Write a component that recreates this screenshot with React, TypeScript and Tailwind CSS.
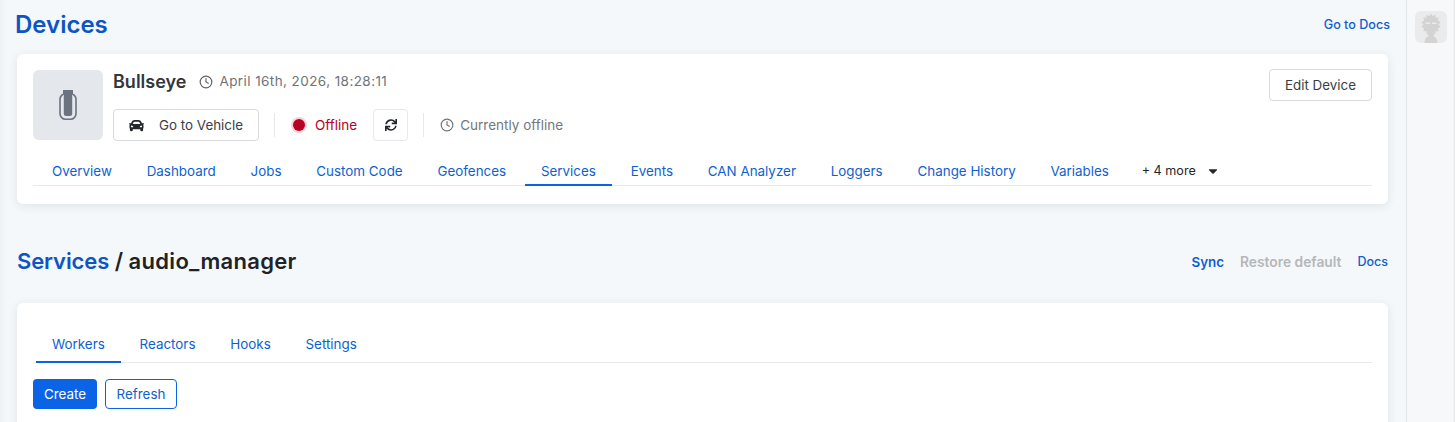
import React from 'react';
import { Clock } from 'lucide-react';
import { FaCar, FaCaretDown, FaSync } from 'react-icons/fa';

const deviceTabs = ['Overview', 'Dashboard', 'Jobs', 'Custom Code', 'Geofences', 'Services', 'Events', 'CAN Analyzer', 'Loggers', 'Change History', 'Variables'];
const serviceTabs = ['Workers', 'Reactors', 'Hooks', 'Settings'];

function Tab({ label, active, tall }: { label: string; active?: boolean; tall?: boolean }) {
  return (
    <a className={`-mb-px mr-[2.8px] block border-b-2 px-4 text-[13.4px] leading-[22px] text-[#0f5fd0] ${tall ? 'pb-[6px]' : 'pb-[2px]'} ${active ? 'border-[#0b63e5]' : 'border-transparent'}`}>
      {label}
    </a>
  );
}

function DriveIcon() {
  return (
    <svg width="18" height="30" viewBox="0 0 18 30" fill="none">
      <rect x="4" y="0" width="10" height="4" fill="#6b7280" />
      <rect x="1" y="3.800" width="16" height="25.400" rx="5.500" stroke="#6b7280" strokeWidth="1.600" />
      <path d="M4.800 4h8.400v19.500a2.500 2.500 0 0 1-2.500 2.500H7.300a2.500 2.500 0 0 1-2.500-2.500z" fill="#6b7280" />
    </svg>
  );
}

// spiky hair outline around the head
const hair = Array.from({ length: 28 }, (_, i) => {
  const a = (i / 28) * Math.PI * 2;
  const r = i % 2 === 0 ? 11 : 8.500;
  return `${(16 + Math.sin(a) * r * 0.9).toFixed(1)},${(13.500 - Math.cos(a) * r).toFixed(1)}`;
}).join(' ');

function Avatar() {
  return (
    <div className="h-8 w-8 overflow-hidden rounded-md bg-[#ebebeb]">
      <svg width="32" height="32" viewBox="0 0 32 32">
        <polygon fill="#d3d3d3" points={hair} />
        <path fill="#d3d3d3" d="M13 22h6v3h-6zM9.500 32c0-4.500 2.500-7 6.500-7s6.500 2.500 6.500 7z" />
        <path fill="#ebebeb" d="M10.500 11.500h4.500v1.500h-4.500zM17 11.500h4.500v1.500H17z" />
      </svg>
    </div>
  );
}

export default function App() {
  return (
    <div className="flex h-screen overflow-hidden bg-[linear-gradient(to_right,#edf1f3,#f5f8fa_6px)] font-['Inter',sans-serif] text-[#1f2328]">
      <main className="min-w-0 flex-1 pl-[15px] pr-[18px]">
        <div className="flex h-[54px] items-center justify-between pb-[4px]">
          <h1 className="text-[24px] font-semibold text-[#0d55c4]">Devices</h1>
          <a className="mr-[-2px] text-[12.6px] font-medium text-[#0f5fd0]">Go to Docs</a>
        </div>

        {/* Device card */}
        <section className="ml-[2px] h-[150px] rounded-md bg-white px-4 pt-4 shadow-[0_2px_10px_rgba(30,50,70,0.1)]">
          <div className="flex h-[70px] items-start">
            <div className="flex h-[70px] w-[70px] shrink-0 items-center justify-center rounded-md bg-[#e4e7eb]">
              <DriveIcon />
            </div>
            <div className="ml-[10px] mr-auto">
              <div className="flex h-[22px] items-center pt-[1px]">
                <span className="text-[18px] font-semibold text-[#33373d]">Bullseye</span>
                <Clock className="ml-[13px] h-[14px] w-[14px] text-[#5f6368]" />
                <span className="ml-[6px] text-[13.5px] tracking-[0.42px] text-[#6f7378]">April 16th, 2026, 18:28:11</span>
              </div>
              <div className="mt-[17px] flex h-[32px] items-center">
                <button className="flex h-[32px] w-[146px] items-center rounded border border-[#d7d9dc] pl-[15px] text-[13.4px] text-[#3a3e44]">
                  <FaCar className="h-[15px] w-[15px] text-[#24272b]" />
                  <span className="ml-[15px]">Go to Vehicle</span>
                </button>
                <div className="ml-[15px] h-[24px] w-px bg-[#e6e8ea]" />
                <span className="ml-[16px] flex h-[16px] w-[16px] items-center justify-center rounded-full bg-[#f8d3da]">
                  <span className="h-[12px] w-[12px] rounded-full bg-[#b80024]" />
                </span>
                <span className="ml-[8px] text-[13.5px] text-[#b80024]">Offline</span>
                <button className="ml-[16px] flex h-[32px] w-[35px] items-center justify-center rounded border border-[#e6e8ea]">
                  <FaSync className="h-[12px] w-[12px] text-[#24272b]" />
                </button>
                <div className="ml-[15px] h-[24px] w-px bg-[#e6e8ea]" />
                <Clock className="ml-[16px] h-[14px] w-[14px] text-[#6f7378]" />
                <span className="ml-[6px] text-[13.5px] text-[#74787d]">Currently offline</span>
              </div>
            </div>
            <button className="-mt-px h-[32px] w-[103px] rounded border border-[#d7d9dc] text-[13.4px] text-[#3a3e44]">Edit Device</button>
          </div>
          <div className="mt-[19px] flex h-[27px] items-end border-b border-[#e8eaec] pl-[3px]">
            {deviceTabs.map(t => (
              <Tab key={t} label={t} active={t === 'Services'} />
            ))}
            <button className="mb-[1px] ml-[14px] flex h-[24px] items-center pb-[2px] text-[12.6px] text-[#24272b]">
              + 4 more
              <FaCaretDown className="ml-[10px] h-[14px] w-[14px]" />
            </button>
          </div>
        </section>

        {/* Services header */}
        <div className="ml-[2px] mt-[40px] flex h-[34px] items-center justify-between">
          <h2 className="text-[22px] font-semibold">
            <span className="tracking-[-0.1px] text-[#0d55c4]">Services</span> / <span className="tracking-[0.3px]">audio_manager</span>
          </h2>
          <div className="flex items-center pt-[2px] text-[13.4px] font-semibold">
            <a className="text-[#0f5fd0]">Sync</a>
            <a className="ml-4 text-[13.8px] text-[#b4b7ba]">Restore default</a>
            <a className="ml-4 text-[12.5px] font-medium text-[#0f5fd0]">Docs</a>
          </div>
        </div>

        {/* Workers card */}
        <section className="ml-[2px] mt-[25px] h-[300px] rounded-md bg-white px-4 pt-[28px] shadow-[0_2px_10px_rgba(30,50,70,0.1)]">
          <div className="flex h-[32px] items-end border-b border-[#e8eaec] pl-[3px]">
            {serviceTabs.map(t => (
              <Tab key={t} label={t} active={t === 'Workers'} tall />
            ))}
          </div>
          <div className="mt-4 flex gap-2">
            <button className="h-[30px] w-[64px] rounded bg-[#0b63e5] text-[13.4px] text-white">Create</button>
            <button className="h-[30px] w-[72px] rounded border border-[#0b63e5] text-[13.4px] text-[#0f5fd0]">Refresh</button>
          </div>
        </section>
      </main>

      <aside className="w-[49px] shrink-0 border-l border-[#e4e7ea] bg-[linear-gradient(to_left,#e6e6e6,#f7f8fa_2px)] pl-[8px] pt-[11px]">
        <Avatar />
      </aside>
    </div>
  );
}
